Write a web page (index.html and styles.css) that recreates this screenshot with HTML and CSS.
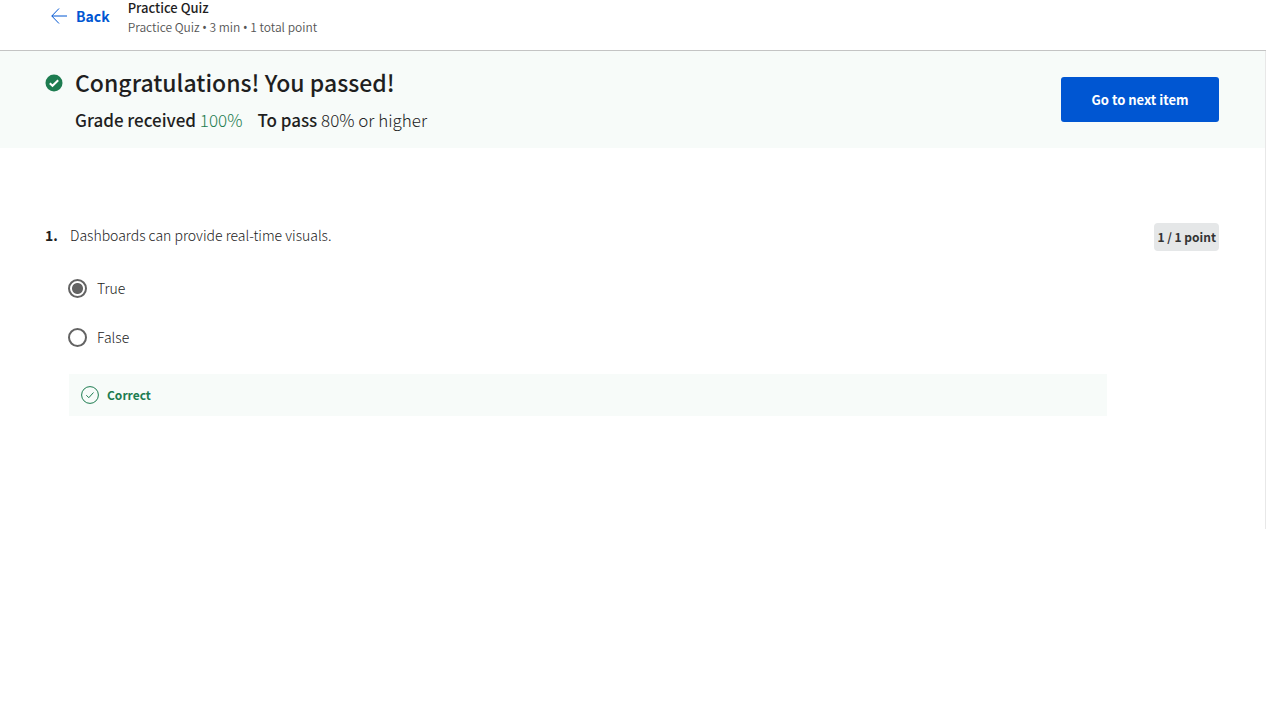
FILE: index.html
```html
<!DOCTYPE html>
<html lang="en">
<head>
<meta charset="utf-8">
<meta name="viewport" content="width=device-width, initial-scale=1">
<title>Practice Quiz</title>
<link rel="stylesheet" href="styles.css">
</head>
<body>
<div class="page">
  <header class="topbar">
    <a class="back" href="#">
      <svg class="back-icon" viewBox="0 0 16 16" aria-hidden="true"><path d="M8 .5.8 8 8 15.500M.8 8H16" fill="none" stroke="currentColor"/></svg>
      <span>Back</span>
    </a>
    <div class="title-block">
      <div class="title">Practice Quiz</div>
      <div class="subtitle">Practice Quiz <span class="dot">•</span> 3 min <span class="dot">•</span> 1 total point</div>
    </div>
  </header>
  <main class="content">
    <section class="banner">
      <svg class="banner-icon" viewBox="0 0 18 18" aria-hidden="true"><circle cx="9" cy="9" r="8.500" fill="#1d7c50"/><path d="m4.800 9.200 2.700 2.600 5.700-5.600" fill="none" stroke="#fff" stroke-width="2"/></svg>
      <div class="result">
        <h1 class="heading">Congratulations! You passed!</h1>
        <div class="grades">
          <span><span class="strong">Grade received</span> <span class="score">100%</span></span>
          <span><span class="strong">To pass</span> 80% or higher</span>
        </div>
      </div>
      <button class="next" type="button">Go to next item</button>
    </section>
    <section class="question">
      <div class="number">1.</div>
      <fieldset class="body">
        <legend class="prompt">Dashboards can provide real-time visuals.</legend>
        <label class="option"><input class="radio" type="radio" name="answer" checked><span>True</span></label>
        <label class="option"><input class="radio" type="radio" name="answer"><span>False</span></label>
        <div class="feedback">
          <svg class="feedback-icon" viewBox="0 0 18 18" fill="none" stroke="currentColor" aria-hidden="true"><circle cx="9" cy="9" r="8.400"/><path d="m5.300 9.200 2.500 2.500 4.700-5.200"/></svg>
          <span>Correct</span>
        </div>
      </fieldset>
      <div class="points">1 / 1 point</div>
    </section>
  </main>
</div>
</body>
</html>
```
FILE: styles.css
```css
* { box-sizing: border-box; }
body {
  margin: 0;
  background: #fff;
  color: #222;
  font-family: "Noto Sans CJK SC", "Noto Sans", sans-serif;
  font-size: 14px;
  line-height: 20px;
}
.page { margin-right: 14px; }
.topbar {
  display: flex;
  gap: 18px;
  height: 51px;
  padding-left: 51px;
  border-bottom: 1px solid #c4c4c4;
}
.back {
  display: flex;
  align-items: center;
  gap: 9px;
  height: 32px;
  color: #0056d2;
  font-weight: 700;
  text-decoration: none;
}
.back-icon { width: 16px; height: 16px; }
.title { height: 17px; line-height: 15px; font-size: 13px; font-weight: 500; color: #1f1f1f; }
.subtitle { font-size: 12px; font-weight: 350; color: #555; }
.dot { font-family: "Noto Sans", sans-serif; font-weight: 400; }
.content { min-height: 478px; border-right: 1px solid #e8e8e8; }
.banner {
  display: flex;
  gap: 12px;
  padding: 13px 46px 14px 45px;
  background: #f7fbf9;
}
.banner-icon { width: 18px; height: 18px; margin-top: 10px; }
.result { flex: 1; }
.heading { margin: 0; font-size: 23px; line-height: 36px; font-weight: 500; color: #1f1f1f; }
.grades { display: flex; gap: 15px; margin-top: 6px; font-size: 17px; line-height: 28px; font-weight: 300; }
.strong { font-weight: 500; color: #1f1f1f; }
.score { color: #1d7c50; }
.next {
  width: 158px;
  height: 45px;
  margin-top: 13px;
  border: 0;
  border-radius: 3px;
  background: #0056d2;
  color: #fff;
  font: inherit;
  font-size: 13px;
  font-weight: 700;
}
.question {
  display: flex;
  align-items: flex-start;
  padding: 75px 46px 0 45px;
}
.number { width: 24px; line-height: 24px; font-weight: 700; color: #1f1f1f; }
.body { flex: 1; min-width: 0; margin: 0 47px 0 0; padding: 0; border: 0; font-weight: 300; }
.prompt { padding: 0 1px; line-height: 24px; margin-bottom: 29px; }
.option { display: flex; align-items: center; gap: 10px; height: 24px; margin-bottom: 25px; }
.radio {
  appearance: none;
  width: 19px;
  height: 19px;
  margin: 0 0 0 -1px;
  border: 2px solid #636363;
  border-radius: 50%;
}
.radio:checked { background: radial-gradient(circle, #636363 5px, transparent 6px); }
.feedback {
  display: flex;
  align-items: center;
  gap: 8px;
  height: 42px;
  padding-left: 12px;
  background: #f7fbf9;
  color: #1d7c50;
  font-size: 12px;
  font-weight: 700;
}
.feedback-icon { width: 18px; height: 18px; }
.points {
  padding: 4px 3px;
  border-radius: 4px;
  background: #e5e7e8;
  color: #333;
  font-size: 12px;
  font-weight: 700;
}
```
